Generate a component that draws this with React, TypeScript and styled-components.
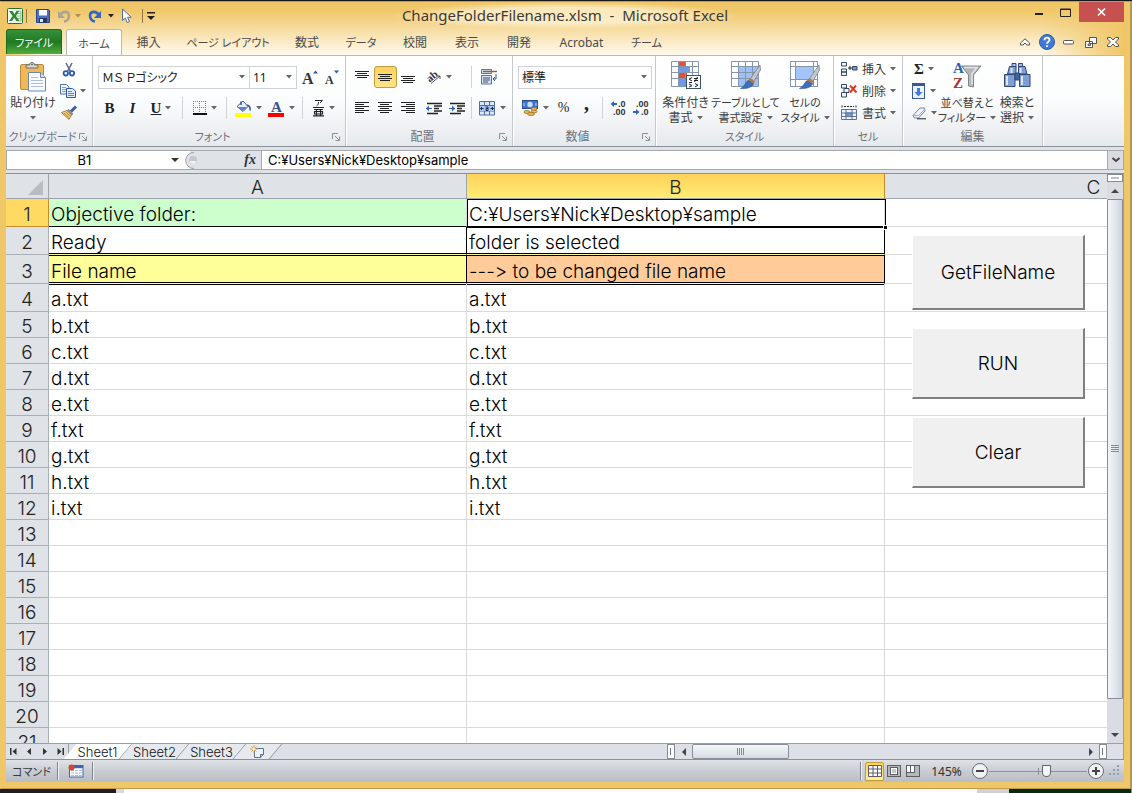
import React from "react";
import styled, { createGlobalStyle, css } from "styled-components";

const UI = `"Noto Sans", "Noto Sans CJK JP", sans-serif`;
const SHEET = `Inter, "Noto Sans CJK JP", sans-serif`;

const Global = createGlobalStyle`
  * { box-sizing: border-box; }
  body { margin: 0; background: #15171a; font-family: ${UI}; font-size: 12px; color: #3b3b3b; }
  button, input, select { font: inherit; color: inherit; margin: 0; padding: 0; border: 0; background: none; }
  svg { overflow: visible; }
`;

/* ---------- frame ---------- */

const Desktop = styled.div`
  height: 100vh;
  display: flex;
  flex-direction: column;
  padding: 1px 1px 0 0;
  background: linear-gradient(#15171a, #15171a) top / 100% 1px no-repeat, #8f948c;
  overflow: hidden;
`;

const Behind = styled.div`
  flex: 0 0 4px;
  display: grid;
  grid-template-columns: 116px 8px 1fr 32px 122px;
`;
const Patch = styled.span<{ $c: string }>`
  background: ${(p) => p.$c};
`;

const Window = styled.div`
  flex: 1;
  min-height: 0;
  display: flex;
  flex-direction: column;
  padding: 0 6px 6px 5px;
  border: 1px solid #c09b48;
  border-left-color: #efc768;
  border-right-color: #b99a50;
  background: linear-gradient(#f0c768 0, #f0c768 8px, rgba(240, 199, 104, 0) 54px),
    linear-gradient(90deg, #f0c768 0, #f0c768 6px, #fffaf0 40px, #fffaf0 calc(100% - 90px), #f0c768 calc(100% - 7px));
  background-size: 100% 54px, 100% 54px;
  background-repeat: no-repeat;
  background-color: #f0c768;
`;

const TitleBar = styled.header`
  flex: 0 0 27px;
  display: grid;
  grid-template-columns: 1fr auto 1fr;
`;

const QuickAccess = styled.div`
  display: flex;
  align-items: center;
`;
const QuickButton = styled.button<{ $w: number }>`
  width: ${(p) => p.$w}px;
  height: 22px;
  display: flex;
  align-items: center;
  justify-content: center;
`;
const QuickDivider = styled.span<{ $w: number }>`
  width: ${(p) => p.$w}px;
  height: 14px;
  background: linear-gradient(#8e7740, #8e7740) center / 1px 14px no-repeat;
`;
const Title = styled.h1`
  margin: 0;
  padding: 0 12px;
  font-size: 15px;
  line-height: 27px;
  font-weight: 400;
  color: #3d3a33;
  white-space: nowrap;
  background: radial-gradient(closest-side, rgba(255, 244, 216, 0.75) 60%, rgba(255, 244, 216, 0));
`;
const WindowControls = styled.div`
  display: flex;
  justify-content: flex-end;
  align-items: flex-start;
`;
const WindowButton = styled.button<{ $close?: boolean }>`
  width: ${(p) => (p.$close ? 45 : 27)}px;
  height: 20px;
  display: flex;
  align-items: center;
  justify-content: center;
  background: ${(p) => (p.$close ? "#c75050" : "none")};
`;

/* ---------- tabs ---------- */

const TabRow = styled.nav`
  flex: 0 0 26px;
  display: flex;
  border-bottom: 1px solid #b6babf;
`;
const FileTab = styled.button`
  width: 56px;
  height: 25px;
  color: #fff;
  font-size: 11px;
  font-feature-settings: "palt";
  border: 1px solid #1d6a1d;
  border-bottom: 0;
  border-radius: 3px 3px 0 0;
  background: linear-gradient(#36913a, #1f7a24 50%, #4fae3c);
  margin-right: 4px;
`;
const Tab = styled.button<{ $w: number; $kana?: boolean; $active?: boolean }>`
  width: ${(p) => p.$w}px;
  height: 26px;
  text-align: center;
  white-space: nowrap;
  color: #4a4a4a;
  font-size: ${(p) => (p.$kana ? 11 : 12)}px;
  font-feature-settings: "palt";
  ${(p) =>
    p.$active &&
    css`
      background: #fff;
      border: 1px solid #b6babf;
      border-bottom: 0;
      border-radius: 3px 3px 0 0;
    `}
`;
const TabTools = styled.div`
  margin-left: auto;
  display: flex;
  align-items: center;
`;
const TabTool = styled.button`
  width: 22px;
  height: 22px;
  display: flex;
  align-items: center;
  justify-content: center;
`;

/* ---------- ribbon ---------- */

const Ribbon = styled.section`
  flex: 0 0 91px;
  display: flex;
  border-bottom: 1px solid #8b9097;
  background: linear-gradient(#fff, #fbfcfd 50%, #e6e9ed);
`;
const Group = styled.section<{ $w: number }>`
  width: ${(p) => p.$w}px;
  flex: none;
  display: flex;
  flex-direction: column;
  border-right: 1px solid #c3c8ce;
  box-shadow: 1px 0 0 #fff;
`;
const GroupBody = styled.div<{ $col?: boolean; $pad?: number }>`
  flex: 1;
  min-height: 0;
  display: flex;
  flex-direction: ${(p) => (p.$col ? "column" : "row")};
  padding: 0 0 0 ${(p) => p.$pad ?? 4}px;
`;
const GroupFooter = styled.div`
  height: 19px;
  display: flex;
  align-items: center;
  color: #6d737b;
  line-height: 18px;
  font-feature-settings: "palt";
  white-space: nowrap;
`;
const GroupName = styled.span<{ $kana?: boolean }>`
  flex: 1;
  text-align: center;
  font-size: ${(p) => (p.$kana ? 11 : 12)}px;
`;
const Launcher = styled.button`
  flex: none;
  width: 13px;
  height: 14px;
  display: flex;
  align-items: center;
`;
const Row = styled.div<{ $top: number }>`
  display: flex;
  align-items: center;
  height: 24px;
  margin-top: ${(p) => p.$top}px;
`;
const Tool = styled.button<{ $w?: number; $on?: boolean }>`
  width: ${(p) => p.$w ?? 23}px;
  height: 22px;
  flex: none;
  display: flex;
  align-items: center;
  justify-content: center;
  gap: 4px;
  ${(p) =>
    p.$on &&
    css`
      border: 1px solid #c29b3c;
      border-radius: 3px;
      background: linear-gradient(#fbd15f, #ffe58a);
    `}
`;
const Bar = styled.span<{ $m?: number }>`
  width: 1px;
  height: 22px;
  flex: none;
  margin: 0 ${(p) => p.$m ?? 5}px;
  background: #cfd3d8;
`;
const SelectWrap = styled.label<{ $w: number; $join?: boolean }>`
  position: relative;
  width: ${(p) => p.$w}px;
  height: 23px;
  border: 1px solid #cfd3d8;
  margin-left: ${(p) => (p.$join ? -1 : 0)}px;
  background: #fff;
`;
const Select = styled.select`
  appearance: none;
  width: 100%;
  height: 21px;
  padding-left: 3px;
  color: #222;
  font-size: 12px;
  font-feature-settings: "palt";
`;
const SelectCaret = styled.span`
  position: absolute;
  right: 4px;
  top: 0;
  height: 21px;
  display: flex;
  align-items: center;
  pointer-events: none;
`;
const Glyph = styled.span<{ $bold?: boolean; $italic?: boolean; $under?: boolean; $high?: boolean; $size?: number }>`
  font-family: "Liberation Serif", serif;
  font-size: ${(p) => p.$size ?? 15}px;
  line-height: 18px;
  padding-bottom: ${(p) => (p.$high ? 10 : 0)}px;
  color: #222;
  font-weight: ${(p) => (p.$bold ? 700 : 400)};
  font-style: ${(p) => (p.$italic ? "italic" : "normal")};
  text-decoration: ${(p) => (p.$under ? "underline" : "none")};
`;
const Big = styled.button<{ $w: number; $kana?: boolean }>`
  width: ${(p) => p.$w}px;
  flex: none;
  display: flex;
  flex-direction: column;
  align-items: center;
  padding-top: 5px;
  font-size: ${(p) => (p.$kana ? 11 : 12)}px;
  line-height: 15px;
  color: #3b3b3b;
  font-feature-settings: "palt";
  white-space: nowrap;
`;
const BigIcon = styled.span`
  height: 34px;
`;
const BigLine = styled.span`
  height: 15px;
  display: flex;
  align-items: center;
  gap: 4px;
`;
const Stack = styled.div<{ $w: number }>`
  width: ${(p) => p.$w}px;
  flex: none;
  padding-top: 2px;
  display: flex;
  flex-direction: column;
`;
const StackTool = styled.button`
  height: 22px;
  display: flex;
  align-items: center;
  gap: 4px;
  white-space: nowrap;
`;

/* ---------- formula bar ---------- */

const FormulaBar = styled.div`
  flex: 0 0 27px;
  display: flex;
  padding: 3px 0;
  background: #dfe2e6;
  border-bottom: 1px solid #8b9097;
  font-family: ${SHEET};
  color: #000;
`;
const NameBox = styled.label`
  width: 176px;
  display: flex;
  align-items: center;
  background: #fff;
  border: 1px solid #a5a9af;
  border-right: 0;
`;
const NameInput = styled.input`
  width: 155px;
  height: 17px;
  text-align: center;
  font-size: 13px;
`;
const FxArea = styled.div`
  width: 79px;
  display: flex;
  align-items: center;
  justify-content: space-between;
  padding: 0 5px 0 3px;
  border: solid #a5a9af;
  border-width: 1px 0;
  background: linear-gradient(90deg, #fff 8px, #dfe2e6 8px);
`;
const Fx = styled.span`
  font: italic 700 14px/16px "Liberation Serif", serif;
  color: #333;
`;
const FormulaInput = styled.input`
  flex: 1;
  min-width: 0;
  padding-left: 6px;
  font-size: 13px;
  background: #fff;
  border: 1px solid #a5a9af;
`;
const Expand = styled.button`
  width: 16px;
  border: 1px solid #a5a9af;
  border-left: 0;
  background: #d9dde2;
  display: flex;
  align-items: center;
  justify-content: center;
`;

/* ---------- sheet ---------- */

const Work = styled.main`
  flex: 1;
  min-height: 0;
  display: flex;
  background: #dfe2e6;
  border-right: 1px solid #9aa0a8;
`;
const SheetView = styled.div`
  position: relative;
  flex: 1;
  min-width: 0;
  overflow: hidden;
  background: #fff;
  font-family: ${SHEET};
  font-feature-settings: "calt" 0;
`;
const Grid = styled.table`
  width: 1297px;
  table-layout: fixed;
  border-collapse: separate;
  border-spacing: 0;
  font-size: 19px;
  line-height: 20px;
  font-weight: 300;
  color: #000;
`;
const Corner = styled.td`
  height: 25px;
  padding: 0;
  vertical-align: bottom;
  background: #dfe2e6;
  border: solid #9ea4ab;
  border-width: 0 1px 1px 0;
  svg { display: block; margin-left: auto; }
`;
const ColHead = styled.th<{ $on?: boolean }>`
  height: 25px;
  padding: 4px 0 0;
  font-weight: 300;
  color: #222;
  background: ${(p) => (p.$on ? "linear-gradient(#ffd25a, #ffec76)" : "#dfe2e6")};
  border: solid #9ea4ab;
  border-width: 0 1px 1px 0;
  border-right-color: ${(p) => (p.$on ? "#c78b2c" : "#9ea4ab")};
`;
const RowHead = styled.th<{ $on?: boolean; $h: number }>`
  height: ${(p) => p.$h}px;
  padding: 5px 0 0;
  font-weight: 300;
  color: #222;
  background: ${(p) => (p.$on ? "#ffda62" : "#dfe2e6")};
  border: solid ${(p) => (p.$on ? "#c78b2c" : "#a9afb7")};
  border-width: 0 1px 1px 0;
`;
type Edge = "folder" | "status" | "heading" | "first";
const edges: Record<Edge, ReturnType<typeof css>> = {
  folder: css`
    border-bottom-color: #000;
  `,
  status: css`
    border-bottom-color: #ffff99;
    border-right-color: #000;
    box-shadow: inset 0 -1px #000;
  `,
  heading: css`
    border-bottom-color: #ffff99;
    border-right-color: #000;
    box-shadow: inset 0 1px #000, inset 0 -1px #000;
  `,
  first: css`
    box-shadow: inset 0 1px #000;
  `,
};
const Cell = styled.td<{ $fill?: string; $edge?: Edge }>`
  position: relative;
  padding: 5px 0 0 2px;
  white-space: nowrap;
  background: ${(p) => p.$fill ?? "#fff"};
  border: solid #d9dadb;
  border-width: 0 1px 1px 0;
  ${(p) => p.$edge && edges[p.$edge]}
`;
const Selection = styled.span`
  position: absolute;
  inset: 0 -2px -2px 0;
  border: 1px solid #000;
  z-index: 1;
`;
const Handle = styled.span`
  position: absolute;
  right: -3px;
  bottom: -3px;
  width: 5px;
  height: 5px;
  background: #000;
  border: 1px solid #fff;
`;
const MacroPanel = styled.div`
  position: absolute;
  left: 906px;
  top: 61px;
  width: 173px;
  display: flex;
  flex-direction: column;
  gap: 18px;
`;
const MacroButton = styled.button<{ $h: number }>`
  height: ${(p) => p.$h}px;
  font-size: 19px;
  font-weight: 300;
  color: #000;
  background: #f0f0f0;
  border: solid;
  border-width: 1px 2px 2px 1px;
  border-color: #fff #808080 #808080 #fff;
`;

const VScroll = styled.div`
  width: 16px;
  display: flex;
  flex-direction: column;
  align-items: center;
  background: #d9dde3;
`;
const VSplit = styled.div`
  width: 16px;
  height: 8px;
  border: 1px solid #858b93;
  background: #fff;
  padding: 2px 3px;
`;
const SplitMark = styled.span`
  display: block;
  height: 2px;
  background: #b5bfd0;
`;
const ScrollArrow = styled.button<{ $flat?: boolean }>`
  width: ${(p) => (p.$flat ? 17 : 16)}px;
  height: ${(p) => (p.$flat ? 14 : 17)}px;
  flex: none;
  display: flex;
  align-items: center;
  justify-content: center;
`;
const VTrack = styled.div`
  flex: 1;
  width: 16px;
  padding-bottom: 27px;
  display: flex;
`;
const VThumb = styled.div`
  flex: 1;
  border: 1px solid #868e9a;
  border-radius: 1px;
  background: linear-gradient(90deg, #f4f5f8, #dfe3ea 60%, #cdd3dd);
  display: flex;
  align-items: center;
  justify-content: center;
`;

const SheetBar = styled.div`
  flex: 0 0 16px;
  display: flex;
  background: #dde1e7;
  border-top: 1px solid #9aa0a8;
  border-right: 1px solid #9aa0a8;
  font-family: ${SHEET};
`;
const SheetNav = styled.div`
  width: 63px;
  display: flex;
  align-items: center;
  justify-content: space-around;
  border-right: 1px solid #9aa0a8;
`;
const NavButton = styled.button`
  width: 14px;
  height: 14px;
  display: flex;
  align-items: center;
  justify-content: center;
`;
const SheetTabs = styled.div`
  display: flex;
`;
const SheetTab = styled.button<{ $w: number; $on?: boolean }>`
  position: relative;
  width: ${(p) => p.$w}px;
  height: 15px;
  font-size: 13px;
  line-height: 14px;
  font-weight: 300;
  color: #111;
  display: flex;
  align-items: center;
  justify-content: center;
  z-index: 0;
  &::before {
    content: "";
    position: absolute;
    z-index: -1;
    inset: 0 0 0 ${(p) => (p.$on ? "-10px" : "0")};
    background: ${(p) => (p.$on ? "#fff" : "#e6e9ee")};
    border-right: 1px solid #8b9097;
    transform: skewX(-40deg);
    clip-path: ${(p) => (p.$on ? "inset(0 0 0 11px)" : "none")};
  }
`;
const HScroll = styled.div`
  margin-left: auto;
  width: 456px;
  display: flex;
  align-items: center;
`;
const HSplit = styled.span`
  width: 8px;
  height: 15px;
  flex: none;
  border: 1px solid #858b93;
  background: #fff;
  padding: 3px 2px;
  display: flex;
`;
const HMark = styled.span`
  width: 1px;
  background: #6e7b92;
`;
const HTrack = styled.div`
  flex: 1;
  height: 15px;
`;
const HThumb = styled.div`
  width: 97px;
  height: 15px;
  border: 1px solid #868e9a;
  border-radius: 2px;
  background: linear-gradient(#f6f7f9, #d6dbe3);
  display: flex;
  align-items: center;
  justify-content: center;
`;
const HEnd = styled.span`
  width: 16px;
`;

/* ---------- status bar ---------- */

const StatusBar = styled.footer`
  flex: 0 0 22px;
  display: flex;
  align-items: center;
  border-top: 1px solid #8b9097;
  background: linear-gradient(#dfe2e6, #c9cdd3 50%, #b9bdc4);
  font-size: 12px;
`;
const StatusText = styled.span`
  width: 51px;
  text-align: center;
  font-size: 11px;
  font-feature-settings: "palt";
`;
const StatusBarLine = styled.span`
  width: 2px;
  height: 18px;
  background: linear-gradient(90deg, #7d838b 50%, #f0f2f4 50%);
`;
const StatusRight = styled.div`
  margin-left: auto;
  display: flex;
  align-items: center;
`;
const ViewButton = styled.button<{ $on?: boolean }>`
  width: 19px;
  height: 19px;
  display: flex;
  align-items: center;
  justify-content: center;
  ${(p) =>
    p.$on &&
    css`
      border: 1px solid #c29b3c;
      border-radius: 2px;
      background: linear-gradient(#ffd25a, #fff09a);
    `}
`;
const Zoom = styled.button`
  width: 49px;
  color: #3a2f2a;
`;
const RoundButton = styled.button`
  width: 18px;
  height: 18px;
  display: flex;
`;
const Range = styled.input`
  appearance: none;
  width: 98px;
  height: 16px;
  background: linear-gradient(#8a929d, #8a929d) center / 100% 1px no-repeat,
    linear-gradient(#8a929d, #8a929d) 50% 50% / 1px 7px no-repeat;
  &::-webkit-slider-thumb {
    appearance: none;
    width: 9px;
    height: 12px;
    border: 1px solid #5f656d;
    border-radius: 1px 1px 5px 5px;
    background: #f4f5f6;
  }
`;

/* ---------- icons ---------- */

const Caret = ({ c = "#666" }: { c?: string }) => (
  <svg width="6" height="4" viewBox="0 0 6 4">
    <path d="M0 0h6L3 3.5z" fill={c} />
  </svg>
);
const Arrow = ({ d }: { d: "up" | "down" | "left" | "right" }) => {
  const paths = { up: "M1 7l4-4 4 4z", down: "M1 3h8l-4 4z", left: "M7 1v8L3 5z", right: "M3 1v8l4-4z" };
  return (
    <svg width="10" height="10" viewBox="0 0 10 10">
      <path d={paths[d]} fill="#444" />
    </svg>
  );
};
const ExcelLogo = () => (
  <svg width="16" height="16" viewBox="0 0 16 16">
    <rect x=".5" y=".5" width="15" height="15" rx="1" fill="#f4faf2" stroke="#26732c" />
    <path d="M10 3h4v10h-4M10 5.5h4M10 8h4M10 10.500h4" stroke="#8fbf8d" fill="none" />
    <path d="M2 3h3.500l2 3.200L9.500 3h2.700L9 8l3.500 5H9.300L7.200 9.700 5 13H2l3.700-5z" fill="#2c8a35" />
  </svg>
);
const Save = () => (
  <svg width="14" height="14" viewBox="0 0 14 14">
    <path d="M.5.5h12l1 1v12H.5z" fill="#4c6fc0" stroke="#27468e" />
    <path d="M3 1h8v5.500H3z" fill="#f5f8ff" />
    <path d="M3 9h8v4.500H3z" fill="#26365f" />
    <path d="M4 10h3v3H4z" fill="#dfe7f7" />
  </svg>
);
const Undo = ({ redo }: { redo?: boolean }) => (
  <svg width="14" height="14" viewBox="0 0 14 14">
    <g transform={redo ? "translate(14 0) scale(-1 1)" : undefined}>
      <path d="M3 6C6 1.500 12 2 12 6.500 12 9.500 10 12 7 12.500" fill="none" stroke={redo ? "#2f67c4" : "#a9a699"} strokeWidth="2.600" />
      <path d="M1 2v7h7z" fill={redo ? "#2f67c4" : "#a9a699"} />
    </g>
  </svg>
);
const Pointer = () => (
  <svg width="12" height="16" viewBox="0 0 12 16">
    <path d="M1.500 1v11.500l2.800-2.400 2 4.500 2.200-1-2-4.300h3.700z" fill="#fff" stroke="#54709c" />
  </svg>
);
const Customize = () => (
  <svg width="8" height="8" viewBox="0 0 8 8">
    <path d="M0 0h8v1.500H0zM0 4h8L4 8z" fill="#222" />
  </svg>
);
const Launch = () => (
  <svg width="8" height="8" viewBox="0 0 8 8" fill="none" stroke="#8b9097">
    <path d="M.5 6V.5H6M3 3l4 4M7.500 3.500v4h-4" />
  </svg>
);
const Paste = () => (
  <svg width="28" height="31" viewBox="0 0 28 31">
    <rect x="1.500" y="3.500" width="23" height="25" rx="1.500" fill="#f0b954" stroke="#b98a3e" />
    <path d="M7 7V4h3.500a2.500 2.500 0 0 1 5 0H19v3z" fill="#d5d8dc" stroke="#6b7078" />
    <circle cx="13" cy="3.500" r="1" fill="#6b7078" />
    <path d="M9.500 11.500h12l5 5v13.500h-17z" fill="#f7faff" stroke="#6f86ae" />
    <path d="M21.500 11.500v5h5" fill="#cfdaec" stroke="#6f86ae" />
    <path d="M12 16.500h7M12 19.500h12M12 22.500h12M12 25.500h12" stroke="#aebfda" />
  </svg>
);
const Cut = () => (
  <svg width="14" height="15" viewBox="0 0 14 15" fill="none">
    <path d="M4 1l4.500 8.500M10 1L5.500 9.500" stroke="#5f6d86" strokeWidth="1.600" />
    <circle cx="3.800" cy="11.300" r="2.200" stroke="#2a5cb0" strokeWidth="1.800" />
    <circle cx="10" cy="11.300" r="2.200" stroke="#2a5cb0" strokeWidth="1.800" />
  </svg>
);
const Copy = () => (
  <svg width="16" height="14" viewBox="0 0 16 14">
    <path d="M.5.5h6l2.500 2.500v7H.5z" fill="#f2f6ff" stroke="#4a71b5" />
    <path d="M2 3.500h4M2 5.500h5M2 7.500h5" stroke="#7f9fd2" />
    <path d="M6.500 4.500h6L15.500 7v6.500h-9z" fill="#e3edff" stroke="#2d5aa6" />
    <path d="M8 7.500h4M8 9.500h6M8 11.500h6" stroke="#5c85c9" />
  </svg>
);
const Brush = () => (
  <svg width="16" height="14" viewBox="0 0 16 14">
    <path d="M15 .5L10 5.500" stroke="#3f5c93" strokeWidth="3" />
    <path d="M7.500 3l5 5-2 1.500-4.800-4.800z" fill="#7d8796" />
    <path d="M.5 6.500l5.500-2 4.500 4.500L8 13.500z" fill="#f2cf7c" stroke="#a88438" />
    <path d="M3 7l5 4.500M5 6l4.500 4.500" stroke="#b48b3c" />
  </svg>
);
const GrowFont = ({ down }: { down?: boolean }) => (
  <svg width="17" height="17" viewBox="0 0 17 17">
    <text x="0" y="15" fontFamily="Liberation Serif, serif" fontWeight="700" fontSize={down ? 12 : 16} fill="#333">
      A
    </text>
    <path d={down ? "M9 1.500h5l-2.500 3z" : "M11 4.500h5l-2.500-3z"} fill="#2d5aa6" />
  </svg>
);
const Borders = () => (
  <svg width="14" height="14" viewBox="0 0 14 14" stroke="#777" fill="none">
    <path d="M.5 0v12M6.500 0v12M12.500 0v12M0 .5h13M0 6.500h13" strokeDasharray="1 1" />
    <path d="M0 13h14" stroke="#111" strokeWidth="2" />
  </svg>
);
const Fill = () => (
  <svg width="17" height="17" viewBox="0 0 17 17">
    <path d="M2 6.500L8 1l5 5.500L8 11.500z" fill="#e8effb" stroke="#3e6196" />
    <path d="M6 5V1.500M12 5c3 1 3.500 3 3 5.500" stroke="#2d5aa6" strokeWidth="1.500" fill="none" />
    <path d="M3 7h9.500L8 11z" fill="#5686cf" />
    <rect y="13" width="16" height="4" fill="#ff0" />
  </svg>
);
const FontColor = () => (
  <svg width="17" height="17" viewBox="0 0 17 17">
    <text x="3" y="12" fontFamily="Liberation Serif, serif" fontWeight="700" fontSize="15" fill="#34558f">
      A
    </text>
    <rect y="13" width="16" height="4" fill="#f00" />
  </svg>
);
const Ruby = () => (
  <svg width="12" height="18" viewBox="0 0 12 18" fill="none" stroke="#222">
    <path d="M2 1.500h7.500L7 4M5.500 3c0 2-.5 3-2 4M0 8.500h11" />
    <path d="M1 10.500h9M3.500 10.500v6M7.500 10.500v6M1.500 12.500h8v2.500h-8zM0 16.800h11" strokeWidth="1.200" />
  </svg>
);
const Lines = ({ rows }: { rows: [number, number, number][] }) => (
  <svg width="15" height="16" viewBox="0 0 15 16" fill="#222" shapeRendering="crispEdges">
    {rows.map(([x, y, w]) => (
      <rect key={y} x={x} y={y} width={w} height="1" />
    ))}
  </svg>
);
const vertical = (y: number): [number, number, number][] => [
  [0, y, 14],
  [2, y + 2, 10],
  [0, y + 4, 14],
  [2, y + 6, 10],
];
const horizontal = (side: 0 | 1 | 2): [number, number, number][] =>
  [2, 4, 6, 8, 10, 12].map((y, i) => {
    const w = i % 2 ? 9 : 14;
    return [Math.floor(((14 - w) * side) / 2), y, w];
  });
const Orient = () => (
  <svg width="16" height="16" viewBox="0 0 16 16">
    <text x="1" y="12" transform="rotate(-40 5 9)" fontFamily="Liberation Serif, serif" fontWeight="700" fontSize="11" fill="#333">
      ab
    </text>
    <path d="M5 14.500L14 7M14 7h-3M14 7v3" stroke="#555" fill="none" />
  </svg>
);
const Indent = ({ more }: { more?: boolean }) => (
  <svg width="17" height="15" viewBox="0 0 17 15" fill="none">
    <path d="M1 2.500h15M8 5h8M8 7.500h5M8 10h8M1 12.500h11" stroke="#222" strokeWidth="1.300" />
    <path d={more ? "M6 7.500L3 4.500v6z" : "M0 7.500L3 4.500v6z"} fill="#2d66c0" />
    <path d="M0 7.500h6" stroke="#2d66c0" />
  </svg>
);
const Wrap = () => (
  <svg width="17" height="16" viewBox="0 0 17 16" fill="none">
    <path d="M.5.500h10v4H.5zM.5 6.500h10v8.500H.5z" fill="#d3e0f5" stroke="#5f7499" />
    <path d="M2 2.500h14" stroke="#8a643a" strokeWidth="1.500" />
    <path d="M2 9h7M2 11h7M2 13h5" stroke="#42536f" />
    <path d="M15 5v5h-3M14 8l-2 2 2 2" stroke="#2d5aa6" />
  </svg>
);
const Merge = () => (
  <svg width="17" height="15" viewBox="0 0 17 15" fill="none">
    <path d="M.5.500h15v13.500H.5zM5.500.5v4M10.500.5v4M5.500 10v4M10.500 10v4M.5 4.500h15M.5 10h15" fill="#dbe7fa" stroke="#4f6f9f" />
    <rect x="1" y="5" width="14" height="5" fill="#a9c6f1" />
    <path d="M1.500 7.500h3M11.500 7.500h3M3 6L1.500 7.500 3 9M13 6l1.500 1.500L13 9" stroke="#1e2d4a" />
    <path d="M6.500 6h2.500v3.500H7V7.500h2" stroke="#1e2d4a" />
  </svg>
);
const Currency = () => (
  <svg width="17" height="16" viewBox="0 0 17 16">
    <rect x=".5" y=".5" width="15" height="8" fill="#3f74c8" stroke="#2b4f91" />
    <circle cx="8" cy="4.500" r="2.700" fill="#cbdcf6" />
    <path d="M2 3v3M14 3v3" stroke="#cbdcf6" />
    <g fill="#f0b954" stroke="#99712a" strokeWidth=".8">
      <ellipse cx="12" cy="9" rx="3" ry="1.500" />
      <ellipse cx="12" cy="11.500" rx="3" ry="1.500" />
      <ellipse cx="5" cy="12" rx="3" ry="1.500" />
      <ellipse cx="9" cy="14" rx="3.500" ry="1.500" />
    </g>
  </svg>
);
const Decimals = ({ less }: { less?: boolean }) => (
  <svg width="17" height="16" viewBox="0 0 17 16" fontFamily="Liberation Sans, sans-serif" fontSize="9" fontWeight="700" fill="#333">
    <text x={less ? 3 : 8} y="7">
      {less ? ".00" : ".0"}
    </text>
    <text x={less ? 8 : 3} y="15">
      {less ? ".0" : ".00"}
    </text>
    <path d={less ? "M0 11h3V9l3.500 3L3 15v-2H0z" : "M7 3H4V1L.5 4 4 7V5h3z"} fill="#2d66c0" />
  </svg>
);
const CellGrid = ({ children, w = 27 }: { children?: React.ReactNode; w?: number }) => (
  <>
    <rect x=".5" y=".5" width={w} height="25" fill="#fff" />
    {children}
    <path d={`M.5.5h${w}v25H.5zM7.500.5v25M14.500.5v25M21.500.5v25M.5 5.500h${w}M.5 11.500h${w}M.5 17.500h${w}`} fill="none" stroke="#8595ad" />
  </>
);
const Conditional = () => (
  <svg width="30" height="30" viewBox="0 0 30 30">
    <CellGrid>
      <rect x="7" width="7" height="6" fill="#e5503c" />
      <rect x="7" y="6" width="12" height="6" fill="#6d9aec" />
      <rect x="7" y="12" width="9" height="6" fill="#e5503c" />
      <rect x="7" y="18" width="7" height="7" fill="#6d9aec" />
    </CellGrid>
    <rect x="15.500" y="14.500" width="14" height="13" fill="#f8fafc" stroke="#3b5468" />
    <path d="M21 16.500l-3 1.700 3 1.700M18 21.500h3M23 17.500h4M23 19.500h4M26.500 16l-3 5M18 23l3 1.500-3 1.500M24 22.500l3 1.700-3 1.600" stroke="#222" fill="none" />
  </svg>
);
const PaintBrush = () => (
  <>
    <path d="M29 4L19.500 17.500l3.500 2.500L29.500 9z" fill="#c4c8cd" stroke="#70767e" strokeWidth=".7" />
    <path d="M19 17l5 4-1.500 2-5-3.500z" fill="#b57a3d" />
    <path d="M17 19.500l5.500 3.500C20 27 15 28 9.500 27.500c4-2 5-6 7.500-8z" fill="#3d6fbd" stroke="#2b4d85" strokeWidth=".6" />
  </>
);
const TableFormat = () => (
  <svg width="30" height="30" viewBox="0 0 30 30">
    <CellGrid>
      <rect x="7" y="6" width="21" height="20" fill="#9fc0f5" />
    </CellGrid>
    <PaintBrush />
  </svg>
);
const CellStyles = () => (
  <svg width="30" height="30" viewBox="0 0 30 30">
    <rect x=".5" y=".5" width="27" height="25" fill="#fff" stroke="#8595ad" />
    <path d="M5.500.5v25M23.500.5v25M.5 5.500h27M.5 18.500h27" stroke="#8595ad" />
    <rect x="6" y="6" width="17" height="12" fill="#a3c5fa" />
    <PaintBrush />
  </svg>
);
const InsertCells = () => (
  <svg width="17" height="15" viewBox="0 0 17 15" fill="#eef3fb" stroke="#34495f">
    <path d="M.5.500h5v3.500h-5zM.5 7h5v3h-5zM.5 10h5v3.500h-5z" />
    <path d="M11.500 4.500h4.500v3.500h-4.500z" fill="#6d9aec" />
    <path d="M7 6h4M9 4v4" stroke="#222" />
  </svg>
);
const DeleteCells = () => (
  <svg width="17" height="15" viewBox="0 0 17 15" fill="#eef3fb" stroke="#34495f">
    <path d="M.5.500h5v3.500h-5zM3 4.500h5v4H3zM.5 8.500h5V13h-5z" />
    <path d="M9 1.500l6.500 7M15 1.500L9 8.500" stroke="#dd3a25" strokeWidth="2" />
  </svg>
);
const FormatCells = () => (
  <svg width="17" height="16" viewBox="0 0 17 16" fill="#eef3fb" stroke="#5d7390">
    <path d="M1 .5v3M15 .5v3M3 1.500h10" strokeDasharray="2 1" stroke="#222" />
    <path d="M.5 4.500h15v10H.5zM5 4.500v10M11 4.500v10M.5 8h15M.5 11.500h15" />
    <path d="M5 8h6v3.500H5z" fill="#6d9aec" />
  </svg>
);
const FillDown = () => (
  <svg width="14" height="16" viewBox="0 0 14 16">
    <rect x=".5" y=".5" width="12" height="15" fill="#edf3ff" stroke="#3a5a94" />
    <path d="M1 2h11" stroke="#3a5a94" strokeWidth="2" />
    <path d="M5 5h3v4h2.500L6.500 13.500l-4-4.500H5z" fill="#3f7be0" />
  </svg>
);
const Eraser = () => (
  <svg width="15" height="13" viewBox="0 0 15 13">
    <path d="M1 8.500L8 1h4.500l.5 3-6.500 7H2.500z" fill="#f1f5fb" stroke="#6b83ab" />
    <path d="M1 8.500h5.500L13 2" stroke="#9bb0d1" fill="none" />
    <path d="M5 11.800h9" stroke="#222" />
  </svg>
);
const SortFilter = () => (
  <svg width="30" height="30" viewBox="0 0 30 30">
    <path d="M9.500 5h19.500l-7.500 9v12l-5-1V14z" fill="#b3b6ba" stroke="#6b6f75" strokeWidth=".8" />
    <path d="M12 6.500h13l-5 6v11" stroke="#e3e5e7" strokeWidth="1.500" fill="none" />
    <text x="1" y="12" fontFamily="Liberation Serif, serif" fontWeight="700" fontSize="15" fill="#2f62ae">
      A
    </text>
    <text x="1" y="27" fontFamily="Liberation Serif, serif" fontWeight="700" fontSize="15" fill="#a5343a">
      Z
    </text>
  </svg>
);
const Binoculars = () => (
  <svg width="28" height="30" viewBox="0 0 28 30" stroke="#2f4876" fill="#7e9fd6">
    <path d="M9 2.500h4v4H9zM15.500 2.500h4v4h-4z" fill="#a9c0e8" />
    <path d="M6.500 5.500h6.500V13H4.500zM15.500 5.500H22l2 7.500h-8.500z" />
    <path d="M1.500 13.500h10.500v12H1.500zM16.500 13.500H27v12H16.500z" />
    <path d="M12 12h4.500v7H12z" fill="#45639a" />
    <path d="M4 15v9M19 15v9M8.500 7v5M17.500 7v5" stroke="#dbe6f8" strokeWidth="2" />
  </svg>
);
const Help = () => (
  <svg width="16" height="16" viewBox="0 0 16 16">
    <circle cx="8" cy="8" r="7.500" fill="#3f7bd6" stroke="#2c5aa5" />
    <path d="M5.500 6.200C5.500 2.800 10.700 3 10.500 6c-.1 1.700-2.500 1.800-2.500 3.800M8 11.200v1.800" stroke="#fff" strokeWidth="1.800" fill="none" />
  </svg>
);
const NewSheet = () => (
  <svg width="16" height="14" viewBox="0 0 16 14">
    <path d="M4.500 3.500h9v6l-3 3h-6z" fill="#eef2f9" stroke="#56719e" />
    <path d="M13.500 9.500h-3v3" fill="#9db4d9" stroke="#56719e" />
    <path d="M4 0v8M0 4h8M1.500 1.500l5 5M6.500 1.500l-5 5" stroke="#e0a030" />
    <circle cx="4" cy="4" r="1.500" fill="#fff4c0" />
  </svg>
);
const Record = () => (
  <svg width="16" height="14" viewBox="0 0 16 14">
    <rect x="1.500" y="1.500" width="13.500" height="11.500" fill="#fff" stroke="#3f66aa" />
    <path d="M2 3h13" stroke="#3f66aa" strokeWidth="2.500" />
    <path d="M3 6.500h11M3 9h11M3 11.500h11" stroke="#a8b9d8" strokeDasharray="3 1" />
    <circle cx="3.500" cy="3.500" r="3" fill="#d8452f" />
  </svg>
);
const ViewNormal = () => (
  <svg width="14" height="12" viewBox="0 0 14 12">
    <path d="M.5.500h13v11H.5zM5 .5v11M9.500.5v11M.5 4h13M.5 8h13" fill="#fff" stroke="#5d5f63" />
  </svg>
);
const ViewLayout = () => (
  <svg width="14" height="12" viewBox="0 0 14 12">
    <rect x=".5" y=".5" width="13" height="11" fill="#b3b6bb" stroke="#5d5f63" />
    <rect x="3.500" y="2.500" width="7" height="7" fill="#fff" stroke="#5d5f63" />
    <path d="M5 5h4M5 7h4" stroke="#8b8e93" />
  </svg>
);
const ViewBreak = () => (
  <svg width="14" height="12" viewBox="0 0 14 12">
    <rect x=".5" y=".5" width="13" height="11" fill="#b3b6bb" stroke="#5d5f63" />
    <path d="M1 1h3v6H1zM5 1h3v6H5z" fill="#fff" />
    <path d="M4.500.5v7M8.500.5v7M.5 7.500h8" stroke="#5d5f63" />
  </svg>
);
const Round = ({ plus }: { plus?: boolean }) => (
  <svg width="18" height="18" viewBox="0 0 18 18">
    <circle cx="9" cy="9" r="7.500" fill="#f0f1f3" stroke="#666c74" />
    <path d={plus ? "M5 9h8M9 5v8" : "M5 9h8"} stroke="#444" strokeWidth="2" />
  </svg>
);
const Grip = () => (
  <svg width="12" height="12" viewBox="0 0 12 12" fill="#8f9eb5">
    <path d="M8 0h2v2H8zM4 4h2v2H4zM8 4h2v2H8zM0 8h2v2H0zM4 8h2v2H4zM8 8h2v2H8z" />
  </svg>
);

/* ---------- data ---------- */

const tabs: { name: string; w: number; kana?: boolean; active?: boolean }[] = [
  { name: "ホーム", w: 56, kana: true, active: true },
  { name: "挿入", w: 53 },
  { name: "ページ レイアウト", w: 106, kana: true },
  { name: "数式", w: 52 },
  { name: "データ", w: 56, kana: true },
  { name: "校閲", w: 52 },
  { name: "表示", w: 52 },
  { name: "開発", w: 52 },
  { name: "Acrobat", w: 73 },
  { name: "チーム", w: 57, kana: true },
];

type RowData = { h: number; a?: string; b?: string; fillA?: string; fillB?: string; edge?: Edge };
const files = ["a", "b", "c", "d", "e", "f", "g", "h", "i"].map((n) => `${n}.txt`);
const rows: RowData[] = [
  { h: 28, a: "Objective folder:", b: "C:¥Users¥Nick¥Desktop¥sample", fillA: "#ccffcc", edge: "folder" },
  { h: 28, a: "Ready", b: "folder is selected", edge: "status" },
  { h: 29, a: "File name", b: "---> to be changed file name", fillA: "#ffff99", fillB: "#ffcc99", edge: "heading" },
  ...files.map((f, i) => ({ h: i === 0 ? 28 : 26, a: f, b: f, edge: i === 0 ? ("first" as Edge) : undefined })),
  ...Array.from({ length: 9 }, () => ({ h: 26 })),
];

const macros = [
  { name: "GetFileName", h: 75 },
  { name: "RUN", h: 71 },
  { name: "Clear", h: 71 },
];

const RibbonGroup = ({ name, w, kana, launch, children }: { name: string; w: number; kana?: boolean; launch?: boolean; children: React.ReactNode }) => (
  <Group $w={w} aria-label={name}>
    {children}
    <GroupFooter>
      <GroupName $kana={kana}>{name}</GroupName>
      {launch && (
        <Launcher aria-label={`${name}の詳細`}>
          <Launch />
        </Launcher>
      )}
    </GroupFooter>
  </Group>
);

export default function App() {
  return (
    <>
      <Global />
      <Desktop>
        <Window>
          <TitleBar>
            <QuickAccess>
              <QuickButton $w={18} aria-label="Excel"><ExcelLogo /></QuickButton>
              <QuickDivider $w={5} />
              <QuickButton $w={28} aria-label="上書き保存"><Save /></QuickButton>
              <QuickButton $w={14} aria-label="元に戻す"><Undo /></QuickButton>
              <QuickButton $w={14} aria-label="元に戻す一覧"><Caret c="#a9905a" /></QuickButton>
              <QuickButton $w={20} aria-label="やり直し"><Undo redo /></QuickButton>
              <QuickButton $w={11} aria-label="やり直し一覧"><Caret c="#222" /></QuickButton>
              <QuickButton $w={22} aria-label="選択"><Pointer /></QuickButton>
              <QuickDivider $w={9} />
              <QuickButton $w={8} aria-label="カスタマイズ"><Customize /></QuickButton>
            </QuickAccess>
            <Title>ChangeFolderFilename.xlsm&nbsp; -&nbsp; Microsoft Excel</Title>
            <WindowControls>
              <WindowButton aria-label="最小化">
                <svg width="10" height="10" viewBox="0 0 10 10"><path d="M1 7h8" stroke="#222" strokeWidth="2" /></svg>
              </WindowButton>
              <WindowButton aria-label="最大化">
                <svg width="11" height="9" viewBox="0 0 11 9"><path d="M.5 1h10v7.500H.5zM.5 1.500h10" fill="none" stroke="#222" /></svg>
              </WindowButton>
              <WindowButton $close aria-label="閉じる">
                <svg width="9" height="8" viewBox="0 0 9 8"><path d="M1 .5l7 7M8 .5l-7 7" stroke="#fff" strokeWidth="1.700" /></svg>
              </WindowButton>
            </WindowControls>
          </TitleBar>

          <TabRow>
            <FileTab>ファイル</FileTab>
            {tabs.map((t) => (
              <Tab key={t.name} $w={t.w} $kana={t.kana} $active={t.active}>{t.name}</Tab>
            ))}
            <TabTools>
              <TabTool aria-label="リボンの最小化">
                <svg width="10" height="8" viewBox="0 0 10 8"><path d="M.5 5L5 .8 9.500 5v2H7L5 5 3 7H.5z" fill="#fff" stroke="#555" /></svg>
              </TabTool>
              <TabTool aria-label="ヘルプ"><Help /></TabTool>
              <TabTool aria-label="ブックを最小化">
                <svg width="12" height="6" viewBox="0 0 12 6"><rect x=".5" y="1.500" width="10" height="3.500" rx="1" fill="#fff" stroke="#555" /></svg>
              </TabTool>
              <TabTool aria-label="元のサイズに戻す">
                <svg width="12" height="11" viewBox="0 0 12 11" fill="#fff" stroke="#555"><path d="M4.500.5h7v6h-7zM.5 4.500h7v6h-7zM3 7h2.500v1.500H3z" /></svg>
              </TabTool>
              <TabTool aria-label="ブックを閉じる">
                <svg width="12" height="10" viewBox="0 0 12 10" fill="#fff" stroke="#555"><path d="M.5.500h3L6 3 8.500.5h3V2L8.500 5l3 3v1.500h-3L6 7 3.500 9.500h-3V8l3-3-3-3z" /></svg>
              </TabTool>
            </TabTools>
          </TabRow>

          <Ribbon>
            <RibbonGroup name="クリップボード" w={87} kana launch>
              <GroupBody $pad={3}>
                <Big $w={48}>
                  <BigIcon><Paste /></BigIcon>
                  <BigLine>貼り付け</BigLine>
                  <BigLine><Caret /></BigLine>
                </Big>
                <Stack $w={34}>
                  <Tool aria-label="切り取り"><Cut /></Tool>
                  <Tool $w={32} aria-label="コピー"><Copy /><Caret /></Tool>
                  <Tool aria-label="書式のコピー"><Brush /></Tool>
                </Stack>
              </GroupBody>
            </RibbonGroup>

            <RibbonGroup name="フォント" w={253} kana launch>
              <GroupBody $col $pad={5}>
                <Row $top={9}>
                  <SelectWrap $w={152}>
                    <Select aria-label="フォント名"><option>ＭＳ Ｐゴシック</option></Select>
                    <SelectCaret><Caret /></SelectCaret>
                  </SelectWrap>
                  <SelectWrap $w={48} $join>
                    <Select aria-label="フォント サイズ"><option>11</option></Select>
                    <SelectCaret><Caret /></SelectCaret>
                  </SelectWrap>
                  <Tool $w={26} aria-label="拡大"><GrowFont /></Tool>
                  <Tool $w={20} aria-label="縮小"><GrowFont down /></Tool>
                </Row>
                <Row $top={7}>
                  <Tool aria-label="太字"><Glyph $bold>B</Glyph></Tool>
                  <Tool aria-label="斜体"><Glyph $italic $bold>I</Glyph></Tool>
                  <Tool $w={34} aria-label="下線"><Glyph $bold $under>U</Glyph><Caret /></Tool>
                  <Bar $m={4} />
                  <Tool $w={35} aria-label="罫線"><Borders /><Caret /></Tool>
                  <Bar $m={4} />
                  <Tool $w={34} aria-label="塗りつぶしの色"><Fill /><Caret /></Tool>
                  <Tool $w={33} aria-label="フォントの色"><FontColor /><Caret /></Tool>
                  <Bar $m={4} />
                  <Tool $w={34} aria-label="ふりがな"><Ruby /><Caret /></Tool>
                </Row>
              </GroupBody>
            </RibbonGroup>

            <RibbonGroup name="配置" w={167} launch>
              <GroupBody>
                <GroupBody $col $pad={1}>
                  <Row $top={9}>
                    <Tool aria-label="上揃え"><Lines rows={vertical(2)} /></Tool>
                    <Tool $on aria-label="上下中央揃え"><Lines rows={vertical(5)} /></Tool>
                    <Tool aria-label="下揃え"><Lines rows={vertical(7)} /></Tool>
                    <Tool $w={38} aria-label="方向"><Orient /><Caret /></Tool>
                  </Row>
                  <Row $top={7}>
                    <Tool aria-label="左揃え"><Lines rows={horizontal(0)} /></Tool>
                    <Tool aria-label="中央揃え"><Lines rows={horizontal(1)} /></Tool>
                    <Tool aria-label="右揃え"><Lines rows={horizontal(2)} /></Tool>
                    <Tool $w={28} aria-label="インデントを減らす"><Indent /></Tool>
                    <Tool $w={18} aria-label="インデントを増やす"><Indent more /></Tool>
                  </Row>
                </GroupBody>
                <GroupBody $col $pad={0}>
                  <Row $top={9}><Bar $m={5} /><Tool $w={24} aria-label="折り返し"><Wrap /></Tool></Row>
                  <Row $top={7}><Bar $m={5} /><Tool $w={30} aria-label="セルを結合"><Merge /><Caret /></Tool></Row>
                </GroupBody>
              </GroupBody>
            </RibbonGroup>

            <RibbonGroup name="数値" w={143} launch>
              <GroupBody $col $pad={5}>
                <Row $top={9}>
                  <SelectWrap $w={134}>
                    <Select aria-label="表示形式"><option>標準</option></Select>
                    <SelectCaret><Caret /></SelectCaret>
                  </SelectWrap>
                </Row>
                <Row $top={7}>
                  <Tool $w={34} aria-label="通貨"><Currency /><Caret /></Tool>
                  <Tool aria-label="パーセント"><Glyph $size={14}>%</Glyph></Tool>
                  <Tool aria-label="桁区切り"><Glyph $bold $high $size={20}>,</Glyph></Tool>
                  <Bar $m={4} />
                  <Tool aria-label="小数点以下を増やす"><Decimals /></Tool>
                  <Tool aria-label="小数点以下を減らす"><Decimals less /></Tool>
                </Row>
              </GroupBody>
            </RibbonGroup>

            <RibbonGroup name="スタイル" w={178} kana>
              <GroupBody $pad={1}>
                <Big $w={57}><BigIcon><Conditional /></BigIcon><BigLine>条件付き</BigLine><BigLine>書式<Caret /></BigLine></Big>
                <Big $w={63} $kana><BigIcon><TableFormat /></BigIcon><BigLine>テーブルとして</BigLine><BigLine>書式設定<Caret /></BigLine></Big>
                <Big $w={56} $kana><BigIcon><CellStyles /></BigIcon><BigLine>セルの</BigLine><BigLine>スタイル<Caret /></BigLine></Big>
              </GroupBody>
            </RibbonGroup>

            <RibbonGroup name="セル" w={69} kana>
              <GroupBody $pad={7}>
                <Stack $w={60}>
                  <StackTool><InsertCells />挿入<Caret /></StackTool>
                  <StackTool><DeleteCells />削除<Caret /></StackTool>
                  <StackTool><FormatCells />書式<Caret /></StackTool>
                </Stack>
              </GroupBody>
            </RibbonGroup>

            <RibbonGroup name="編集" w={140}>
              <GroupBody $pad={6}>
                <Stack $w={31}>
                  <Tool $w={30} aria-label="合計"><Glyph $bold $size={15}>Σ</Glyph><Caret /></Tool>
                  <Tool $w={30} aria-label="フィル"><FillDown /><Caret /></Tool>
                  <Tool $w={30} aria-label="クリア"><Eraser /><Caret /></Tool>
                </Stack>
                <Big $w={54} $kana><BigIcon><SortFilter /></BigIcon><BigLine>並べ替えと</BigLine><BigLine>フィルター<Caret /></BigLine></Big>
                <Big $w={46}><BigIcon><Binoculars /></BigIcon><BigLine>検索と</BigLine><BigLine>選択<Caret /></BigLine></Big>
              </GroupBody>
            </RibbonGroup>
          </Ribbon>

          <FormulaBar>
            <NameBox>
              <NameInput aria-label="名前ボックス" defaultValue="B1" />
              <svg width="20" height="10" viewBox="0 0 20 10"><path d="M9 3h8l-4 4z" fill="#333" /></svg>
            </NameBox>
            <FxArea>
              <svg width="14" height="17" viewBox="0 0 14 17">
                <path d="M9 .5C-2 1-2 16 9 16.500h5V.5z" fill="#dfe2e6" />
                <path d="M9 .5C-2 1-2 16 9 16.500" fill="none" stroke="#9aa0a8" />
                <circle cx="8" cy="8" r="4" fill="#c4c8ce" />
                <path d="M5 9a3 3 0 0 0 6 0z" fill="#eef0f2" />
              </svg>
              <Fx>fx</Fx>
            </FxArea>
            <FormulaInput aria-label="数式バー" defaultValue="C:¥Users¥Nick¥Desktop¥sample" />
            <Expand aria-label="数式バーの展開">
              <svg width="8" height="6" viewBox="0 0 8 6"><path d="M.5 1L4 4l3.500-3" fill="none" stroke="#444" strokeWidth="2" /></svg>
            </Expand>
          </FormulaBar>

          <Work>
            <SheetView>
              <Grid>
                <colgroup>
                  <col width="43" />
                  <col width="418" />
                  <col width="418" />
                  <col width="418" />
                </colgroup>
                <thead>
                  <tr>
                    <Corner>
                      <svg width="22" height="19" viewBox="0 0 22 19"><path d="M2 16h15V1z" fill="#b8bdc4" /></svg>
                    </Corner>
                    <ColHead>A</ColHead>
                    <ColHead $on>B</ColHead>
                    <ColHead>C</ColHead>
                  </tr>
                </thead>
                <tbody>
                  {rows.map((r, i) => (
                    <tr key={i}>
                      <RowHead $h={r.h} $on={i === 0}>{i + 1}</RowHead>
                      <Cell $fill={r.fillA} $edge={r.edge}>{r.a}</Cell>
                      <Cell $fill={r.fillB} $edge={r.edge}>
                        {r.b}
                        {i === 0 && <Selection><Handle /></Selection>}
                      </Cell>
                      <Cell />
                    </tr>
                  ))}
                </tbody>
              </Grid>
              <MacroPanel>
                {macros.map((m) => (
                  <MacroButton key={m.name} $h={m.h}>{m.name}</MacroButton>
                ))}
              </MacroPanel>
            </SheetView>
            <VScroll>
              <VSplit><SplitMark /></VSplit>
              <ScrollArrow aria-label="上へスクロール"><Arrow d="up" /></ScrollArrow>
              <VTrack>
                <VThumb>
                  <svg width="8" height="8" viewBox="0 0 8 8"><path d="M0 .5h8M0 2.500h8M0 4.500h8M0 6.500h8" stroke="#858b94" /></svg>
                </VThumb>
              </VTrack>
              <ScrollArrow aria-label="下へスクロール"><Arrow d="down" /></ScrollArrow>
            </VScroll>
          </Work>

          <SheetBar>
            <SheetNav>
              <NavButton aria-label="先頭のシート"><svg width="8" height="8" viewBox="0 0 8 8"><path d="M0 0h1.500v7H0zM6.500 0v7L2.500 3.500z" fill="#333" /></svg></NavButton>
              <NavButton aria-label="前のシート"><svg width="8" height="8" viewBox="0 0 8 8"><path d="M6 0v7L2 3.500z" fill="#333" /></svg></NavButton>
              <NavButton aria-label="次のシート"><svg width="8" height="8" viewBox="0 0 8 8"><path d="M2 0v7l4-3.500z" fill="#333" /></svg></NavButton>
              <NavButton aria-label="最後のシート"><svg width="8" height="8" viewBox="0 0 8 8"><path d="M6.500 0H8v7H6.500zM1.500 0v7l4-3.500z" fill="#333" /></svg></NavButton>
            </SheetNav>
            <SheetTabs>
              <SheetTab $w={57} $on>Sheet1</SheetTab>
              <SheetTab $w={57}>Sheet2</SheetTab>
              <SheetTab $w={57}>Sheet3</SheetTab>
              <SheetTab $w={36} aria-label="ワークシートの挿入"><NewSheet /></SheetTab>
            </SheetTabs>
            <HScroll>
              <HSplit><HMark /></HSplit>
              <ScrollArrow $flat aria-label="左へスクロール"><Arrow d="left" /></ScrollArrow>
              <HTrack>
                <HThumb><svg width="8" height="7" viewBox="0 0 8 7"><path d="M.5 0v7M2.500 0v7M4.500 0v7M6.500 0v7" stroke="#858b94" /></svg></HThumb>
              </HTrack>
              <ScrollArrow $flat aria-label="右へスクロール"><Arrow d="right" /></ScrollArrow>
              <HSplit><HMark /></HSplit>
              <HEnd />
            </HScroll>
          </SheetBar>

          <StatusBar>
            <StatusText>コマンド</StatusText>
            <StatusBarLine />
            <QuickButton $w={33} aria-label="マクロの記録"><Record /></QuickButton>
            <StatusBarLine />
            <StatusRight>
              <StatusBarLine />
              <Bar $m={1} />
              <ViewButton $on aria-label="標準"><ViewNormal /></ViewButton>
              <ViewButton aria-label="ページ レイアウト"><ViewLayout /></ViewButton>
              <ViewButton aria-label="改ページ プレビュー"><ViewBreak /></ViewButton>
              <Zoom>145%</Zoom>
              <RoundButton aria-label="縮小"><Round /></RoundButton>
              <Range type="range" aria-label="ズーム" min={0} max={100} defaultValue={59} />
              <RoundButton aria-label="拡大"><Round plus /></RoundButton>
              <QuickButton $w={19} aria-label="サイズ変更"><Grip /></QuickButton>
            </StatusRight>
          </StatusBar>
        </Window>
        <Behind>
          <Patch $c="#1d1e20" />
          <Patch $c="#d8dadc" />
          <Patch $c="#fdfdfd" />
          <Patch $c="#d0d2d2" />
          <Patch $c="#062b0a" />
        </Behind>
      </Desktop>
    </>
  );
}
